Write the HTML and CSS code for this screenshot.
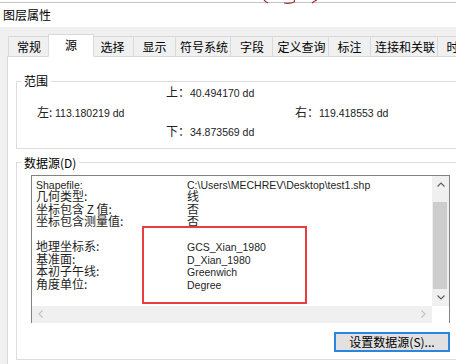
FILE: index.html
```html
<!DOCTYPE html>
<html lang="zh-CN">
<head>
    <meta charset="UTF-8">
    <title>图层属性</title>
    <link rel="stylesheet" href="styles.css">
</head>
<body>
    <svg class="scribble" viewBox="0 0 80 4" width="80" height="4">
        <path d="M4,0 Q6,2 8,3" />
        <path d="M24,3 Q30,4 34,2 Q35,1 34,0" />
        <path d="M52,3 Q54,1 57,0" />
    </svg>
    <div class="title">图层属性</div>
    <div class="dialog">
        <div class="tabs">
            <div class="tab">常规</div>
            <div class="tab active">源</div>
            <div class="tab">选择</div>
            <div class="tab">显示</div>
            <div class="tab">符号系统</div>
            <div class="tab">字段</div>
            <div class="tab">定义查询</div>
            <div class="tab">标注</div>
            <div class="tab">连接和关联</div>
            <div class="tab">时间</div>
        </div>
        <div class="panel">
            <fieldset class="group extent">
                <legend>范围</legend>
                <div class="extent-grid">
                    <span class="top">上：<em>40.494170 dd</em></span>
                    <span class="left">左: <em>113.180219 dd</em></span>
                    <span class="right">右：<em>119.418553 dd</em></span>
                    <span class="bottom">下：<em>34.873569 dd</em></span>
                </div>
            </fieldset>
            <fieldset class="group source">
                <legend>数据源(D)</legend>
                <div class="listbox">
                    <div class="list-text">
                        <span><em>Shapefile:</em></span><span><em>C:\Users\MECHREV\Desktop\test1.shp</em></span>
                        <span>几何类型:</span><span>线</span>
                        <span>坐标包含 Z 值:</span><span>否</span>
                        <span>坐标包含测量值:</span><span>否</span>
                        <span>&nbsp;</span><span></span>
                        <span>地理坐标系:</span><span><em>GCS_Xian_1980</em></span>
                        <span>基准面:</span><span><em>D_Xian_1980</em></span>
                        <span>本初子午线:</span><span><em>Greenwich</em></span>
                        <span>角度单位:</span><span><em>Degree</em></span>
                    </div>
                    <div class="vscroll">
                        <div class="arrow">
                            <svg width="8" height="5" viewBox="0 0 8 5"><polyline points="0.5,4.5 4,1 7.5,4.5" /></svg>
                        </div>
                        <div class="track"><div class="thumb"></div></div>
                        <div class="arrow">
                            <svg width="8" height="5" viewBox="0 0 8 5"><polyline points="0.5,0.5 4,4 7.5,0.5" /></svg>
                        </div>
                    </div>
                    <div class="hscroll">
                        <svg class="dim" width="5" height="8" viewBox="0 0 5 8"><polyline points="4.5,0.5 1,4 4.5,7.5" /></svg>
                        <svg class="dim" width="5" height="8" viewBox="0 0 5 8"><polyline points="0.5,0.5 4,4 0.5,7.5" /></svg>
                    </div>
                    <div class="corner"></div>
                    <div class="highlight"></div>
                </div>
                <div class="actions">
                    <button class="button">设置数据源(S)...</button>
                </div>
            </fieldset>
        </div>
    </div>
</body>
</html>
```

FILE: styles.css
```css
body {
    margin: 0; width: 456px; height: 364px; overflow: hidden; position: relative;
    background: #fff; color: #000;
    font-family: "Noto Sans CJK SC", sans-serif; font-size: 12px;
}
em { font-style: normal; font-family: "Liberation Sans", Arial, sans-serif; font-size: 10.5px; }
.scribble { position: absolute; left: 260px; top: 0; fill: none; stroke: #a0282c; stroke-width: 1.1; }
.title {
    margin-top: 2px; border-top: 1px solid #c4c4c4;
    height: 24px; line-height: 23px; padding-left: 3px;
}
.dialog { width: 480px; height: 340px; background: #f0f0f0; padding: 9px 0 0 7px; box-sizing: border-box; }

.tabs { display: flex; height: 21px; padding-left: 1px; position: relative; z-index: 1; }
.tab {
    box-sizing: border-box; min-width: 42px; padding: 0 4px;
    border: 1px solid #d9d9d9; border-left: none;
    line-height: 19px; text-align: center; white-space: nowrap; background: #f0f0f0;
}
.tab:first-child { border-left: 1px solid #d9d9d9; }
.tab.active {
    background: #fff; min-width: 46px; height: 23px; margin: -2px -2px 0;
    border-left: 1px solid #d9d9d9; border-bottom-color: #fff; position: relative;
}
.tab.active + .tab { border-left: none; }

.panel {
    background: #fff; border: 1px solid #d9d9d9; margin-top: -1px;
    height: 320px; padding: 18px 0 0 8px; box-sizing: border-box;
}
.group { margin: 0; padding: 0; width: 449px; box-sizing: border-box; border: 1px solid #dcdcdc; min-width: 0; }
.group legend { padding: 0 3px; margin-left: 4px; line-height: 12px; }

.extent { padding-bottom: 7px; }
.extent-grid {
    display: grid; grid-template-columns: 129px 129px 1fr; grid-auto-rows: 19.5px;
    margin: -5px 0 0 20px; line-height: 19.5px; color: #222;
}
.extent-grid .top { grid-column: 2; grid-row: 1; }
.extent-grid .left { grid-column: 1; grid-row: 2; }
.extent-grid .right { grid-column: 3; grid-row: 2; }
.extent-grid .bottom { grid-column: 2; grid-row: 3; }
.extent-grid em { font-size: 10.5px; }

.source { margin-top: 8px; padding-bottom: 7px; }
.listbox {
    position: relative; margin: 6px 14px 0 14px; height: 148px; box-sizing: border-box;
    border: 1px solid #828282; display: grid;
    grid-template-columns: 1fr 17px; grid-template-rows: 1fr 17px;
}
.list-text {
    display: grid; grid-template-columns: 151px 1fr; grid-auto-rows: 12.5px;
    padding: 2px 0 0 4px; line-height: 12.5px; color: #1e1e1e; align-content: start;
}
.list-text em { font-size: 10.5px; }
.vscroll { background: #f0f0f0; display: flex; flex-direction: column; }
.vscroll .arrow { height: 17px; display: flex; align-items: center; justify-content: center; }
.vscroll svg, .hscroll svg { fill: none; stroke: #606060; stroke-width: 1.2; }
.track { flex: 1; }
.thumb { margin: 9px 2px 0 1px; height: 87px; background: #cdcdcd; }
.hscroll {
    background: #f0f0f0; display: flex; align-items: center; justify-content: space-between;
    padding: 0 6px;
}
.hscroll svg.dim { stroke: #c2c2c2; }
.corner { background: #fff; }
.highlight {
    position: absolute; left: 110px; top: 50px; width: 165px; height: 78px;
    box-sizing: border-box; border: 2px solid #ea3d3f; pointer-events: none;
}

.actions { display: flex; justify-content: flex-end; margin: 9px 14px 0 0; }
.button {
    width: 116px; height: 20px; padding: 0; box-sizing: border-box;
    border: 2px solid #2a86dc; background: #e1e1e1; color: #000;
    font-family: "Noto Sans CJK SC", sans-serif; font-size: 12px; line-height: 15px;
}
```
